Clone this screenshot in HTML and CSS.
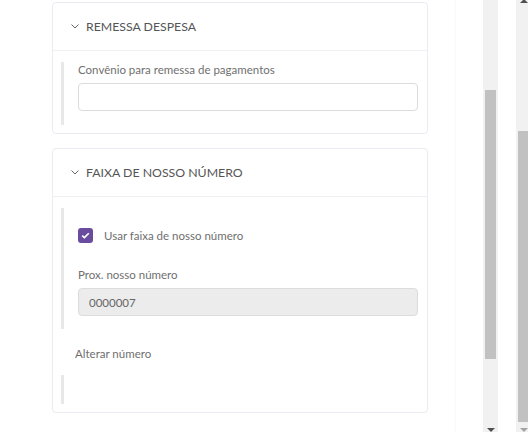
FILE: index.html
```
<!DOCTYPE html>
<html lang="pt-BR">
<head>
  <meta charset="UTF-8" />
  <meta name="viewport" content="width=device-width, initial-scale=1.0" />
  <title>Configuração de cobrança</title>
  <link rel="stylesheet" href="styles.css">
</head>
<body>
  <div class="screen">
    <div class="scroll-area">
      <div class="panel">

        <section class="card">
          <header class="card-header">
            <svg class="chevron" width="8" height="5" viewBox="0 0 8 5"><polyline points="0.5,0.5 4,4 7.5,0.5" /></svg>
            <span>Remessa despesa</span>
          </header>
          <div class="card-body">
            <div class="group group-first">
              <label class="field-label" for="convenio">Convênio para remessa de pagamentos</label>
              <input class="field-input" id="convenio" type="text" />
            </div>
          </div>
        </section>

        <section class="card">
          <header class="card-header">
            <svg class="chevron" width="8" height="5" viewBox="0 0 8 5"><polyline points="0.5,0.5 4,4 7.5,0.5" /></svg>
            <span>Faixa de nosso número</span>
          </header>
          <div class="card-body">
            <div class="group group-faixa">
              <div class="check-row">
                <span class="checkbox">
                  <svg width="9" height="7" viewBox="0 0 9 7"><polyline points="1.2,3.6 3.4,5.6 7.8,1.2" /></svg>
                </span>
                <span class="check-text">Usar faixa de nosso número</span>
              </div>
              <label class="field-label" for="prox">Prox. nosso número</label>
              <input class="field-input field-disabled" id="prox" type="text" value="0000007" disabled />
            </div>
            <div class="group-title">Alterar número</div>
            <div class="group group-empty"></div>
          </div>
        </section>

      </div>
    </div>

    <div class="scrollbar scrollbar-inner">
      <div class="thumb"></div>
      <div class="arrow arrow-down"></div>
    </div>
    <div class="spacer"></div>
    <div class="scrollbar scrollbar-outer">
      <div class="arrow arrow-up"></div>
      <div class="thumb"></div>
      <div class="arrow arrow-down arrow-off"></div>
    </div>
  </div>
</body>
</html>
```

FILE: styles.css
```
body {
  margin: 0;
  font-family: Lato, 'Open Sans', sans-serif;
  background: #fff;
  overflow: hidden;
}
.screen {
  display: flex;
  width: 528px;
  height: 432px;
  overflow: hidden;
}
.scroll-area {
  width: 483px;
  flex-shrink: 0;
}
.panel {
  width: 456px;
  height: 432px;
  box-sizing: border-box;
  padding: 2px 27px 0 52px;
  border-right: 1px solid #f9f9f9;
}
.card {
  border: 1px solid #ebebf1;
  border-radius: 4px;
  margin-bottom: 14px;
}
.card-header {
  display: flex;
  align-items: center;
  gap: 7px;
  height: 47px;
  padding-left: 18px;
  border-bottom: 1px solid #efeff4;
  font-size: 12.3px;
  color: #555;
  text-transform: uppercase;
}
.chevron polyline {
  fill: none;
  stroke: #666;
  stroke-width: 1;
}
.card-body {
  padding: 11px 9px 8px 8px;
}
.group {
  border-left: 3px solid #e8e8e8;
  padding-left: 14px;
}
.group-first {
  padding-top: 1px;
  padding-bottom: 14px;
}
.group-faixa {
  padding-top: 20px;
  padding-bottom: 13px;
}
.group-empty {
  height: 29px;
}
.field-label {
  display: block;
  font-size: 11.5px;
  line-height: 14px;
  color: #6f6f6f;
  margin-bottom: 6px;
}
.field-input {
  display: block;
  width: 100%;
  height: 28px;
  box-sizing: border-box;
  padding: 0 10px;
  border: 1px solid #dcdcdc;
  border-radius: 4px;
  background: #fff;
  font-family: inherit;
  font-size: 11.5px;
  color: #666;
}
.field-disabled {
  background: #ececec;
}
.check-row {
  display: flex;
  align-items: center;
  gap: 11px;
  margin-bottom: 25px;
}
.checkbox {
  display: flex;
  align-items: center;
  justify-content: center;
  width: 15px;
  height: 15px;
  border-radius: 3px;
  background: #6a4c9e;
}
.checkbox polyline {
  fill: none;
  stroke: #fff;
  stroke-width: 1.6;
}
.check-text {
  font-size: 11.5px;
  line-height: 14px;
  color: #6f6f6f;
}
.group-title {
  font-size: 11.5px;
  line-height: 14px;
  color: #6f6f6f;
  padding-left: 14px;
  margin: 18px 0 14px;
}
.scrollbar {
  flex-shrink: 0;
  width: 15px;
  height: 432px;
  background: #f1f1f1;
  display: flex;
  flex-direction: column;
}
.thumb {
  background: #c1c1c1;
}
.scrollbar-inner .thumb {
  margin: 90px 2px 0;
  height: 269px;
}
.scrollbar-inner .arrow-down {
  margin-top: 69px;
}
.spacer {
  flex-shrink: 0;
  width: 18px;
}
.scrollbar-outer .arrow-up {
  margin-top: -1px;
}
.scrollbar-outer .thumb {
  margin: 128px 2px 0;
  height: 291px;
}
.scrollbar-outer .arrow-down {
  margin-top: 6px;
}
.arrow {
  width: 0;
  height: 0;
  align-self: center;
  border-left: 4px solid transparent;
  border-right: 4px solid transparent;
}
.arrow-up {
  border-bottom: 4px solid #505050;
}
.arrow-down {
  border-top: 4px solid #505050;
}
.arrow-off {
  border-top-color: #a3a3a3;
}
```
